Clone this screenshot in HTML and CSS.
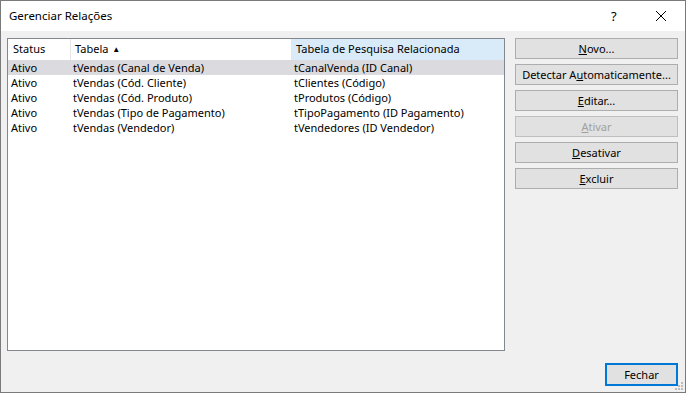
FILE: index.html
```html
<!DOCTYPE html>
<html lang="pt">
<head>
  <meta charset="UTF-8" />
  <title>Gerenciar Relações</title>
  <link rel="stylesheet" href="styles.css">
</head>
<body>
  <div class="dialog">
    <div class="titlebar">
      <span class="title">Gerenciar Relações</span>
      <span class="help">?</span>
      <span class="close">
        <svg width="12" height="12" viewBox="0 0 12 12"><path d="M1 1 L11 11 M11 1 L1 11" stroke="#000" stroke-width="1" fill="none"/></svg>
      </span>
    </div>

    <div class="content">
      <div class="listbox">
        <div class="head">
          <div class="hcell c1">Status</div>
          <div class="hcell c2">Tabela <span class="sort">&#9650;</span></div>
          <div class="hcell c3 sorted">Tabela de Pesquisa Relacionada</div>
        </div>
        <div class="row selected">
          <div class="cell c1">Ativo</div>
          <div class="cell c2">tVendas (Canal de Venda)</div>
          <div class="cell c3">tCanalVenda (ID Canal)</div>
        </div>
        <div class="row">
          <div class="cell c1">Ativo</div>
          <div class="cell c2">tVendas (Cód. Cliente)</div>
          <div class="cell c3">tClientes (Código)</div>
        </div>
        <div class="row">
          <div class="cell c1">Ativo</div>
          <div class="cell c2">tVendas (Cód. Produto)</div>
          <div class="cell c3">tProdutos (Código)</div>
        </div>
        <div class="row">
          <div class="cell c1">Ativo</div>
          <div class="cell c2">tVendas (Tipo de Pagamento)</div>
          <div class="cell c3">tTipoPagamento (ID Pagamento)</div>
        </div>
        <div class="row">
          <div class="cell c1">Ativo</div>
          <div class="cell c2">tVendas (Vendedor)</div>
          <div class="cell c3">tVendedores (ID Vendedor)</div>
        </div>
      </div>

      <div class="actions">
        <button class="btn"><u>N</u>ovo...</button>
        <button class="btn">Detectar A<u>u</u>tomaticamente...</button>
        <button class="btn"><u>E</u>ditar...</button>
        <button class="btn" disabled><u>A</u>tivar</button>
        <button class="btn"><u>D</u>esativar</button>
        <button class="btn"><u>E</u>xcluir</button>
      </div>
    </div>

    <div class="footer">
      <button class="btn primary">Fechar</button>
      <svg class="grip" width="10" height="10" viewBox="0 0 10 10">
        <rect x="7" y="1" width="2" height="2" fill="#bcbcbc"/>
        <rect x="4" y="4" width="2" height="2" fill="#bcbcbc"/>
        <rect x="7" y="4" width="2" height="2" fill="#bcbcbc"/>
        <rect x="1" y="7" width="2" height="2" fill="#bcbcbc"/>
        <rect x="4" y="7" width="2" height="2" fill="#bcbcbc"/>
        <rect x="7" y="7" width="2" height="2" fill="#bcbcbc"/>
      </svg>
    </div>
  </div>
</body>
</html>
```

FILE: styles.css
```css
body {
  margin: 0;
  font-family: 'Noto Sans', sans-serif;
  font-size: 11px;
  color: #000;
  background: #f0f0f0;
}

.dialog {
  width: 686px;
  height: 393px;
  box-sizing: border-box;
  border: 1px solid #7a7a7a;
  background: #f0f0f0;
  display: flex;
  flex-direction: column;
}

.titlebar {
  height: 30px;
  background: #fff;
  display: flex;
  align-items: center;
  padding-left: 8px;
  padding-bottom: 1px;
  box-sizing: border-box;
  font-size: 11.5px;
}

.title {
  flex: 1;
}

.help {
  width: 14px;
  font-size: 13px;
  margin-right: 30px;
}

.close {
  width: 12px;
  height: 12px;
  margin-right: 18px;
  display: flex;
}

.content {
  display: flex;
  gap: 10px;
  padding: 7px 7px 0 6px;
}

.listbox {
  width: 498px;
  height: 313px;
  box-sizing: border-box;
  border: 1px solid #828790;
  background: #fff;
}

.head,
.row {
  display: grid;
  grid-template-columns: 63px 221px 1fr;
}

.head {
  height: 21px;
}

.hcell {
  line-height: 20px;
  padding-left: 5px;
  border-right: 1px solid #e5e5e5;
  white-space: nowrap;
}

.hcell.c2 {
  padding-left: 4px;
}

.hcell.c3 {
  border-right: none;
  padding-left: 4px;
}

.hcell.sorted {
  background: #d9ebf9;
}

.sort {
  font-size: 8px;
  vertical-align: 1px;
  margin-left: 1px;
}

.row {
  height: 15px;
}

.row.selected {
  background: #dadadf;
}

.cell {
  line-height: 15px;
  padding-left: 3px;
  white-space: nowrap;
}

.cell.c2,
.cell.c3 {
  padding-left: 2px;
}

.actions {
  width: 163px;
  display: flex;
  flex-direction: column;
  gap: 5px;
}

.btn {
  height: 21px;
  padding: 0;
  font-family: 'Noto Sans', sans-serif;
  font-size: 11px;
  color: #000;
  background: #e1e1e1;
  border: 1px solid #adadad;
  white-space: nowrap;
}

.btn:disabled {
  color: #a0a0a0;
  background: #e1e1e1;
  border-color: #bfbfbf;
}

.footer {
  display: flex;
  justify-content: flex-end;
  align-items: flex-start;
  padding: 12px 0 0 0;
  position: relative;
  flex: 1;
}

.btn.primary {
  width: 73px;
  height: 23px;
  margin-right: 7px;
  border: 2px solid #0078d7;
}

.grip {
  position: absolute;
  right: 1px;
  bottom: 1px;
}
```
